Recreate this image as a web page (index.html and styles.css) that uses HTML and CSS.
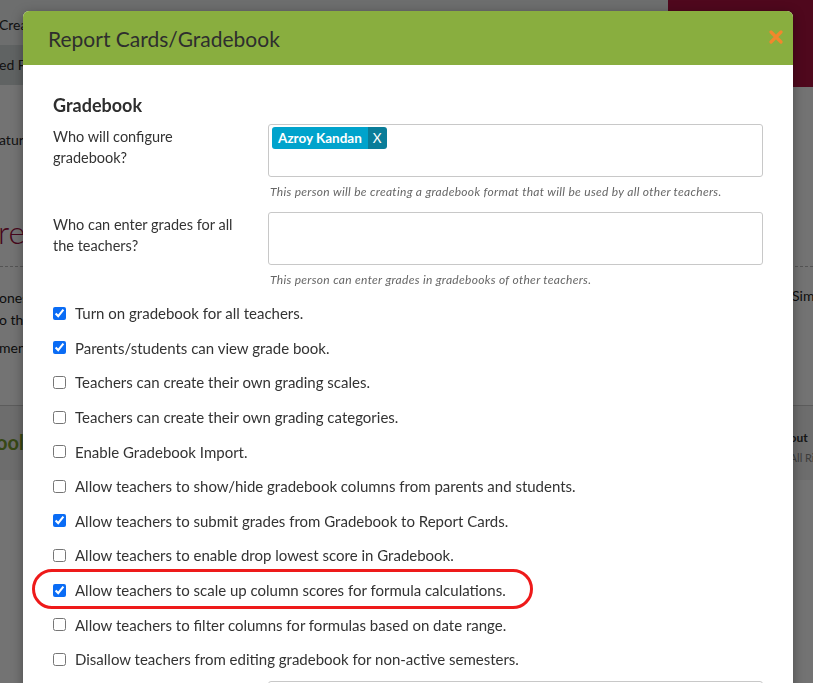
FILE: index.html
```html
<!DOCTYPE html>
<html lang="en">
<head>
  <meta charset="UTF-8">
  <meta name="viewport" content="width=device-width,initial-scale=1">
  <title>Report Cards/Gradebook</title>
  <link rel="stylesheet" href="styles.css">
</head>
<body>

<!-- page behind the modal -->
<div class="page">
  <div class="topbar">
    <span class="topbar-link">Create</span>
    <div class="brand-block"></div>
  </div>
  <div class="subbar">ed Files</div>
  <div class="content">
    <p class="feature">atures</p>
    <p class="big-title">re</p>
    <div class="dashed"></div>
    <div class="cols">
      <div class="col-left">
        <p>ones</p>
        <p>o the</p>
        <p>ments</p>
      </div>
      <div class="col-right"><p>Simple</p></div>
    </div>
  </div>
  <div class="footer">
    <div class="footer-left">
      <p class="footer-brand">ools</p>
    </div>
    <div class="footer-right">
      <p class="footer-bold">out</p>
      <p class="footer-sub">All Rights</p>
    </div>
  </div>
</div>
<div class="overlay"></div>

<div class="modal">
  <div class="modal-head">
    <h2>Report Cards/Gradebook</h2>
    <span class="close">
      <svg width="14" height="14" viewBox="0 0 14 14"><path d="M2 2 L12 12 M12 2 L2 12" stroke="#f2872c" stroke-width="3.2" stroke-linecap="round"/></svg>
    </span>
  </div>

  <div class="modal-body">
    <h3>Gradebook</h3>

    <div class="form-row">
      <label>Who will configure gradebook?</label>
      <div class="field">
        <div class="tag-box">
          <span class="tag"><span class="tag-name">Azroy Kandan</span><span class="tag-x">X</span></span>
        </div>
        <p class="help">This person will be creating a gradebook format that will be used by all other teachers.</p>
      </div>
    </div>

    <div class="form-row">
      <label>Who can enter grades for all the teachers?</label>
      <div class="field">
        <div class="tag-box"></div>
        <p class="help">This person can enter grades in gradebooks of other teachers.</p>
      </div>
    </div>

    <ul class="checks">
      <li><input type="checkbox" checked> Turn on gradebook for all teachers.</li>
      <li><input type="checkbox" checked> Parents/students can view grade book.</li>
      <li><input type="checkbox"> Teachers can create their own grading scales.</li>
      <li><input type="checkbox"> Teachers can create their own grading categories.</li>
      <li><input type="checkbox"> Enable Gradebook Import.</li>
      <li><input type="checkbox"> Allow teachers to show/hide gradebook columns from parents and students.</li>
      <li><input type="checkbox" checked> Allow teachers to submit grades from Gradebook to Report Cards.</li>
      <li><input type="checkbox"> Allow teachers to enable drop lowest score in Gradebook.</li>
      <li class="marked"><input type="checkbox" checked> Allow teachers to scale up column scores for formula calculations.</li>
      <li><input type="checkbox"> Allow teachers to filter columns for formulas based on date range.</li>
      <li><input type="checkbox"> Disallow teachers from editing gradebook for non-active semesters.</li>
    </ul>

    <div class="form-row">
      <label></label>
      <div class="field"><div class="tag-box"></div></div>
    </div>
  </div>
</div>

</body>
</html>
```

FILE: styles.css
```css
html, body {
  margin: 0;
  height: 100%;
  overflow: hidden;
}

body {
  font-family: "Lato", "Open Sans", sans-serif;
  color: #333;
  background: #fff;
}

p { margin: 0; }

/* background page */
.page {
  font-family: "Lato", sans-serif;
  font-size: 14px;
  white-space: nowrap;
}

.topbar {
  height: 45px;
  background: #f2f4f4;
  display: flex;
  align-items: center;
  position: relative;
}

.topbar-link {
  margin-left: -1px;
  margin-top: 4px;
  color: #2a2a2a;
}

.brand-block {
  position: absolute;
  right: 0;
  top: 0;
  width: 145px;
  height: 87px;
  background: #b01242;
}

.subbar {
  height: 40px;
  line-height: 40px;
  text-indent: -1px;
  background: #d6dcdc;
  color: #2a2a2a;
}

.content {
  padding-top: 46px;
}

.feature {
  text-indent: -1px;
  color: #2a2a2a;
}

.big-title {
  margin-top: 64px;
  font-size: 32px;
  font-weight: 300;
  color: #9e1040;
  text-indent: -2px;
  line-height: 40px;
}

.dashed {
  margin-top: 14px;
  border-top: 1px dashed #bbb;
}

.cols {
  display: flex;
  justify-content: space-between;
  padding-top: 20px;
  height: 118px;
}

.col-left p {
  text-indent: -1px;
  line-height: 22px;
  color: #1d1d1d;
}

.col-left p:last-child { margin-top: 6px; }

.col-right p {
  margin-right: -20px;
  color: #1d1d1d;
}

.footer {
  border-top: 1px solid #ccc;
  background: #f1f1f1;
  height: 75px;
  display: flex;
  justify-content: space-between;
  padding-top: 24px;
  box-sizing: border-box;
}

.footer-brand {
  font-size: 20px;
  font-weight: 700;
  color: #7aa030;
  text-indent: -4px;
}

.footer-bold {
  font-size: 12px;
  font-weight: 700;
  margin-right: -4px;
  color: #333;
}

.footer-sub {
  font-size: 11px;
  color: #888;
  margin-top: 6px;
  margin-right: -22px;
}

.overlay {
  position: fixed;
  inset: 0;
  background: rgba(0, 0, 0, 0.55);
}

/* modal */
.modal {
  position: absolute;
  left: 23px;
  top: 11px;
  width: 770px;
  height: 720px;
  background: #fff;
  border-radius: 6px 6px 0 0;
  box-shadow: 0 3px 12px rgba(0, 0, 0, 0.35);
}

.modal-head {
  height: 54px;
  background: #89ae3f;
  border-radius: 6px 6px 0 0;
  display: flex;
  align-items: center;
  justify-content: space-between;
  padding: 0 10px 0 25px;
}

.modal-head h2 {
  margin: 0;
  font-size: 21px;
  font-weight: 400;
  color: #2e2e2e;
}

.close {
  display: flex;
  margin-top: -2px;
}

.modal-body {
  padding: 29px 30px 0;
  font-size: 15px;
}

.modal-body h3 {
  margin: 0 0 8px;
  font-size: 18px;
  font-weight: 700;
  color: #2e2e2e;
  line-height: 22px;
}

.form-row {
  display: grid;
  grid-template-columns: 215px 495px;
  margin-bottom: 13px;
}

.form-row label {
  padding-top: 2px;
  padding-right: 30px;
  font-size: 14.5px;
  line-height: 21px;
  color: #333;
}

.tag-box {
  height: 53px;
  border: 1px solid #c8c8c8;
  border-radius: 3px;
  box-sizing: border-box;
  padding: 2px 3px;
}

.tag {
  display: inline-flex;
  height: 22px;
  line-height: 22px;
  border-radius: 3px;
  overflow: hidden;
  color: #fff;
  font-size: 13.5px;
  font-weight: 700;
}

.tag-name {
  background: #00a3cc;
  padding: 0 6px;
}

.tag-x {
  background: #0a7d99;
  padding: 0 5px;
  font-weight: 400;
}

.help {
  margin-top: 7px;
  font-size: 12px;
  letter-spacing: 0.3px;
  font-style: italic;
  color: #666;
  padding-left: 2px;
}

.checks {
  list-style: none;
  margin: -4px 0 0;
  padding: 0;
}

.checks li {
  display: flex;
  align-items: center;
  height: 34.6px;
  color: #333;
}

.checks li:last-child { margin-bottom: 4px; }

.checks input {
  margin: 0 9px 0 0;
  width: 13px;
  height: 13px;
  accent-color: #0a6cf5;
}

.checks li.marked { position: relative; }

.checks li.marked::before {
  content: "";
  position: absolute;
  left: -21px;
  top: -4px;
  width: 495px;
  height: 34px;
  border: 3px solid #ee1a1a;
  border-radius: 20px;
}
```
